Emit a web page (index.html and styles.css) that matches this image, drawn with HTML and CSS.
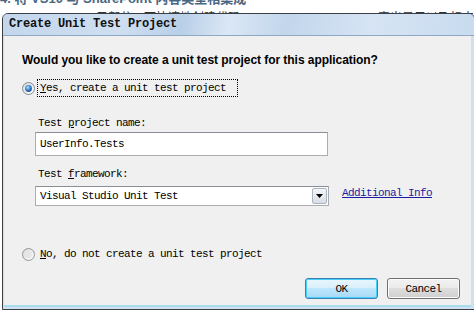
FILE: index.html
```html
<!DOCTYPE html>
<html lang="en">
<head>
    <meta charset="UTF-8">
    <title>Create Unit Test Project</title>
    <link rel="stylesheet" href="styles.css">
</head>
<body>
    <div class="page-head">4. 将 VS10 与 SharePoint 内容类型相集成</div>
    <div class="page-line">
        <span class="line-left">子部分，可快速地创建代码</span>
        <span class="line-right">突出显示以及标丰</span>
    </div>

    <div class="dialog">
        <div class="titlebar">Create Unit Test Project</div>
        <div class="client">
            <p class="question">Would you like to create a unit test project for this application?</p>

            <div class="option">
                <svg class="radio" width="13" height="13" viewBox="0 0 13 13">
                    <defs>
                        <radialGradient id="dot" cx="0.4" cy="0.35" r="0.7">
                            <stop offset="0" stop-color="#b9e0fb"/>
                            <stop offset="0.5" stop-color="#3d8ad6"/>
                            <stop offset="1" stop-color="#18457e"/>
                        </radialGradient>
                        <linearGradient id="ring" x1="0" y1="0" x2="1" y2="1">
                            <stop offset="0" stop-color="#d8d8d8"/>
                            <stop offset="1" stop-color="#ffffff"/>
                        </linearGradient>
                    </defs>
                    <circle cx="6.5" cy="6.5" r="6" fill="url(#ring)" stroke="#7e8b98"/>
                    <circle cx="6.5" cy="6.5" r="3.4" fill="url(#dot)"/>
                </svg>
                <span class="option-text focused"><u>Y</u>es, create a unit test project</span>
            </div>

            <div class="fields">
                <div class="field-label">Test <u>p</u>roject name:</div>
                <div class="textbox">UserInfo.Tests</div>
                <div class="field-label second">Test <u>f</u>ramework:</div>
                <div class="select-row">
                    <div class="select">
                        <span>Visual Studio Unit Test</span>
                        <span class="drop">
                            <svg width="7" height="4" viewBox="0 0 7 4"><path d="M0 0h7L3.5 4z" fill="#000"/></svg>
                        </span>
                    </div>
                    <a class="info-link" href="#">Additional Info</a>
                </div>
            </div>

            <div class="option no-option">
                <svg class="radio" width="13" height="13" viewBox="0 0 13 13">
                    <circle cx="6.5" cy="6.5" r="6" fill="url(#ring)" stroke="#8f969c"/>
                    <circle cx="6.5" cy="6.5" r="3.6" fill="#e6e6e6"/>
                </svg>
                <span class="option-text"><u>N</u>o, do not create a unit test project</span>
            </div>

            <div class="buttons">
                <button class="btn default">OK</button>
                <button class="btn">Cancel</button>
            </div>
        </div>
    </div>
</body>
</html>
```

FILE: styles.css
```css
body {
    margin: 0;
    width: 474px;
    height: 319px;
    overflow: hidden;
    background-color: #fff;
    font-family: "Liberation Mono", monospace;
}
.page-head {
    margin-top: -8px;
    height: 14px;
    line-height: 14px;
    font-family: "Liberation Sans", "Noto Sans CJK SC", sans-serif;
    font-size: 13px;
    font-weight: bold;
    color: #4a6782;
    white-space: nowrap;
}
.page-line {
    display: flex;
    justify-content: space-between;
    height: 14px;
    line-height: 14px;
    padding: 4px 0 0 96px;
    font-family: "Noto Sans CJK SC", sans-serif;
    font-size: 12px;
    color: #333;
    white-space: nowrap;
}
.dialog {
    position: relative;
    margin: -11px 0 0 2px;
    width: 467px;
    border: 1px solid #3b3f44;
    border-radius: 6px 6px 0 0;
    background-color: #cfe0f1;
    padding: 0 3px 2px 1px;
}
.titlebar {
    height: 21px;
    line-height: 21px;
    margin: 0 -3px 0 -1px;
    padding-left: 6px;
    border-radius: 5px 5px 0 0;
    background: linear-gradient(100deg, #c3d6ec 0%, #cfdff1 25%, #b9cfe8 38%, #dbe7f5 48%, #c2d6ec 60%, #d6e4f4 78%, #c8dbef 100%);
    font-size: 12px;
    font-weight: bold;
    letter-spacing: -0.2px;
    color: #111;
    border-bottom: 1px solid #8fa8c4;
}
.client {
    background-color: #f0f0f0;
    padding: 0 11px 6px 18px;
    border-bottom: 2px solid #a9dced;
    font-size: 11px;
    letter-spacing: -0.6px;
    color: #000;
}
.question {
    margin: 0;
    padding-top: 16px;
    height: 16px;
    line-height: 16px;
    font-family: "Liberation Sans", sans-serif;
    font-size: 12px;
    font-weight: bold;
    letter-spacing: -0.05px;
    color: #000;
}
.option {
    display: flex;
    align-items: center;
    height: 18px;
    margin-top: 11px;
}
.radio {
    flex: none;
}
.option-text {
    margin-left: 2px;
    padding: 0 11px 0 2px;
    height: 16px;
    line-height: 16px;
    border: 1px dotted transparent;
}
.option-text.focused {
    border-color: #000;
}
.fields {
    padding-left: 13px;
}
.field-label {
    margin-top: 19px;
    height: 14px;
    line-height: 14px;
    padding-left: 3px;
}
.field-label.second {
    margin-top: 11px;
}
.textbox {
    box-sizing: border-box;
    margin-top: 2px;
    width: 293px;
    height: 24px;
    line-height: 22px;
    padding-left: 4px;
    border: 1px solid #abadb3;
    border-top-color: #8a8e97;
    background-color: #fff;
}
.select-row {
    display: flex;
    align-items: center;
    margin-top: 5px;
    gap: 13px;
}
.select {
    box-sizing: border-box;
    display: flex;
    align-items: center;
    justify-content: space-between;
    width: 294px;
    height: 20px;
    padding: 0 1px 0 4px;
    border: 1px solid #abadb3;
    border-top-color: #8a8e97;
    background-color: #fff;
}
.drop {
    box-sizing: border-box;
    display: flex;
    align-items: center;
    justify-content: center;
    width: 15px;
    height: 16px;
    border: 1px solid #a9b6c6;
    border-radius: 2px;
    background: linear-gradient(#f4f5f7, #d9dde3);
}
.info-link {
    color: #1c1ca0;
    text-decoration: underline;
    margin-top: -7px;
}
.no-option {
    margin-top: 39px;
}
.buttons {
    display: flex;
    justify-content: flex-end;
    gap: 9px;
    margin-top: 15px;
}
.btn {
    box-sizing: border-box;
    width: 73px;
    height: 21px;
    padding: 0;
    font-family: "Liberation Mono", monospace;
    font-size: 11px;
    letter-spacing: -0.6px;
    color: #000;
    border: 1px solid #707070;
    border-radius: 3px;
    background: linear-gradient(#f2f2f2 0%, #ebebeb 45%, #dddddd 50%, #cfcfcf 100%);
    box-shadow: inset 0 0 0 1px #fcfcfc;
}
.btn.default {
    border-color: #3c7fb1;
    background: linear-gradient(#eaf6fd 0%, #d9f0fc 45%, #bee6fd 50%, #a7d9f5 100%);
    box-shadow: inset 0 0 0 1px #48d0f8;
}
```
